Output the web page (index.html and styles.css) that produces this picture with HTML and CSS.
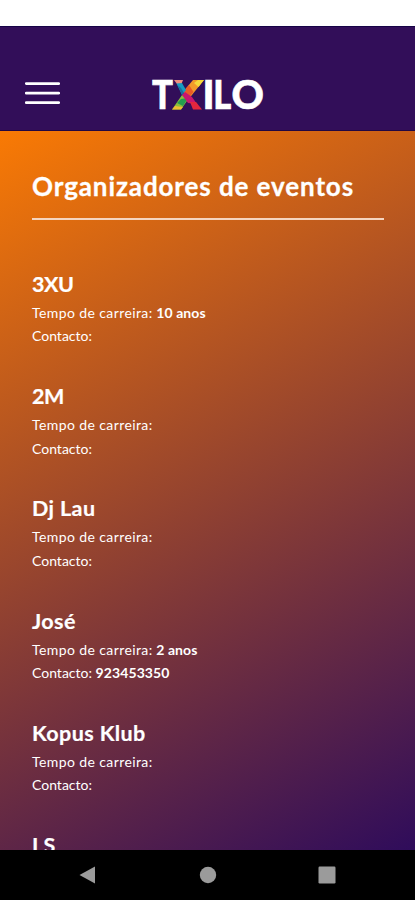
FILE: index.html
```html
<!DOCTYPE html>
<html lang="pt">
<head>
<meta charset="utf-8">
<title>Txilo</title>
<link rel="stylesheet" href="styles.css">
</head>
<body>
<div class="status"></div>
<header class="header">
  <svg class="menu" viewBox="0 0 36 25" aria-hidden="true">
    <path d="M2.3 2.6H34.7M2.3 12.2H34.7M2.3 21.7H34.7"/>
  </svg>
  <svg class="logo" viewBox="0 0 115 40">
    <text x="2" y="29" textLength="21" lengthAdjust="spacingAndGlyphs">T</text>
    <path fill="#f29a2b" d="M43 0H54L39.5 18L33 12Z"/>
    <path fill="#f5d83b" d="M48 0H54L48.5 7L44 3Z"/>
    <path fill="#eb5a27" d="M39 5L43.5 12L39.5 17L33 12Z"/>
    <path fill="#ef8d7e" d="M24 0H33L31 5L27 4Z"/>
    <path fill="#159ac2" d="M26.5 3.5L32 3L36 10L32 15Z"/>
    <path fill="#1a6e9c" d="M28 5.5L31 8L34 13L32 15Z"/>
    <path fill="#8bbd3d" d="M32 15L39 18L31 29.5H22Z"/>
    <path fill="#249b50" d="M31 19L38 18L33 26L27 23Z"/>
    <path fill="#efbd32" d="M25 26L33 27L31 29.5H22Z"/>
    <path fill="#c81670" d="M35 12L42 17L47 24L38 23L32 15Z"/>
    <path fill="#e3263e" d="M40 22L46 22L52 29.5H43Z"/>
    <text x="52.6" y="29">I</text>
    <text x="63.3" y="29" textLength="18" lengthAdjust="spacingAndGlyphs">L</text>
    <text x="81.6" y="29" textLength="32.4" lengthAdjust="spacingAndGlyphs">O</text>
  </svg>
</header>
<main class="content">
  <h1 class="title">Organizadores de eventos</h1>
  <section class="item"><h2 class="tight">3XU</h2><p><span>Tempo de carreira:</span> <b>10 anos</b></p><p>Contacto:</p></section>
  <section class="item"><h2 class="tight">2M</h2><p><span>Tempo de carreira:</span></p><p>Contacto:</p></section>
  <section class="item"><h2>Dj Lau</h2><p><span>Tempo de carreira:</span></p><p>Contacto:</p></section>
  <section class="item"><h2>José</h2><p><span>Tempo de carreira:</span> <b>2 anos</b></p><p>Contacto: <b>923453350</b></p></section>
  <section class="item"><h2>Kopus Klub</h2><p><span>Tempo de carreira:</span></p><p>Contacto:</p></section>
  <section class="item"><h2>LS</h2></section>
</main>
<nav class="navbar">
  <svg viewBox="0 0 18 18"><path d="M0.5 9L16 0.5V17.5Z"/></svg>
  <svg viewBox="0 0 18 18"><circle cx="9" cy="9" r="8.2"/></svg>
  <svg viewBox="0 0 18 18"><rect x="0.5" y="0.5" width="17" height="17" rx="1.2"/></svg>
</nav>
</body>
</html>
```
FILE: styles.css
```css
* { box-sizing: border-box; margin: 0; padding: 0; }
body {
  width: 415px;
  height: 900px;
  overflow: hidden;
  display: flex;
  flex-direction: column;
  background: #fff;
  color: #fff;
  font-family: Lato, "Liberation Sans", sans-serif;
}
.status { height: 26px; flex: none; }
.header {
  height: 105px;
  flex: none;
  display: flex;
  align-items: flex-start;
  background: #320e59;
  border-top: 1px solid #160347;
  border-bottom: 1px solid #210743;
}
.menu {
  width: 36px;
  height: 25px;
  margin: 54px 0 0 24px;
}
.menu path { fill: none; stroke: #fff; stroke-width: 2.8; stroke-linecap: round; }
.logo {
  width: 115px;
  height: 40px;
  margin: 53px 0 0 90px;
  overflow: visible;
}
.logo text {
  fill: #fff;
  stroke: #fff;
  stroke-width: 0.6px;
  font: 900 40px Lato, sans-serif;
}
.content {
  flex: 1;
  min-height: 0;
  overflow: hidden;
  padding: 37px 31px 0 32px;
  background: linear-gradient(152deg, #f97a04 0%, #2f0c5b 100%);
}
.title {
  height: 52px;
  margin-bottom: 48px;
  border-bottom: 2px solid #f5d5c0;
  font-size: 26px;
  line-height: 36px;
  font-weight: 700;
  letter-spacing: 0.9px;
  -webkit-text-stroke: 0.3px #fff;
}
.item { height: 112.2px; }
.item h2 {
  font-size: 21.5px;
  line-height: 33px;
  font-weight: 700;
  letter-spacing: 0.4px;
  -webkit-text-stroke: 0.2px #fff;
}
.item h2.tight { letter-spacing: -0.5px; }
.item p { font-size: 14px; line-height: 23.4px; }
.item span { letter-spacing: 0.4px; }
.item b { letter-spacing: 0.1px; }
.navbar {
  height: 50px;
  flex: none;
  display: flex;
  justify-content: space-between;
  align-items: center;
  padding: 1px 79px;
  background: #000;
}
.navbar svg { width: 18px; height: 18px; fill: #9b9b9b; }
```
